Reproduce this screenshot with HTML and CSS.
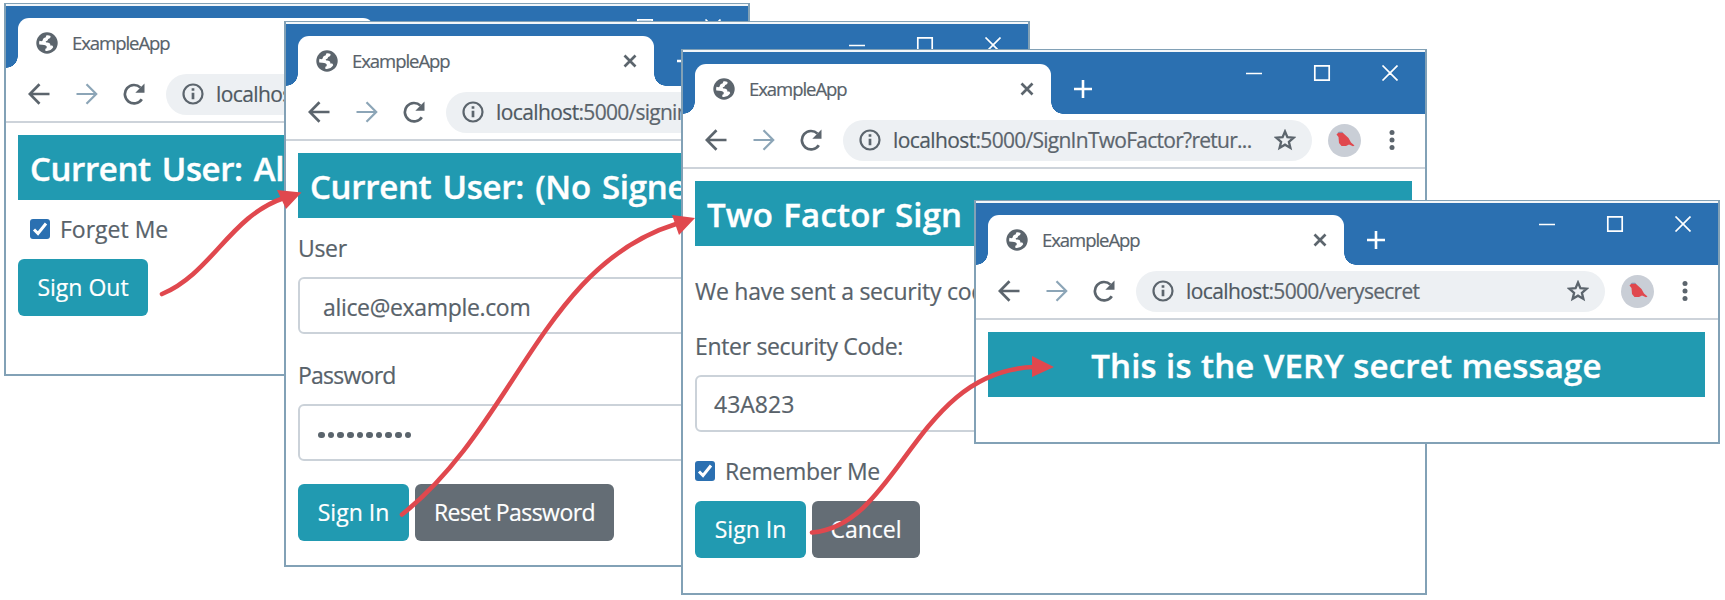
FILE: index.html
```html
<!DOCTYPE html>
<html lang="en">
<head>
<meta charset="utf-8">
<title>ExampleApp</title>
<link rel="stylesheet" href="styles.css">
</head>
<body>
<svg class="defs" width="0" height="0">
  <symbol id="globe" viewBox="0 0 22 22"><circle cx="11" cy="11" r="10.7" fill="#5c656d"/><path d="M10.5 3.2C12 3 13.500 3.300 14.500 4C14.800 5.500 14 6.700 12.200 7C11.800 8.300 11.500 9 9.800 9.300C9.500 10.800 10.800 10.600 12.500 10.700C14 11 14.500 12.200 14.300 13.500H16.200C16.800 14 17 14.700 17.200 15.300C15.800 17.500 13.500 18.900 11 18.900C10.500 18.900 9.800 18.800 9.300 18.700V16.800C10.800 16.600 10.900 15.500 10.600 14.300C9.800 12.800 7.500 12.700 3.300 12.500C3 10.800 3.200 9.800 3.500 8.800C5 9.300 6 9.300 6.600 8.600C7 6.500 8 6 9.500 5.600Z" fill="#fff"/></symbol>
  <symbol id="close" viewBox="0 0 14 14"><path d="M1.500 1.500l11 11m0-11l-11 11" stroke="#5c656d" stroke-width="2.700"/></symbol>
  <symbol id="plus" viewBox="0 0 18 18"><path d="M9 0v18M0 9h18" stroke="#fff" stroke-width="2.600"/></symbol>
  <symbol id="controls" viewBox="0 0 152 16"><path d="M0 8.500h16M68.800.8h14.400v14.400h-14.400zM136.500.5l15 15m0-15l-15 15" fill="none" stroke="#fff" stroke-width="1.700"/></symbol>
  <symbol id="arrow" viewBox="0 0 22 22"><path d="M21.500 11H2M11.500 1.300L1.800 11l9.700 9.700" fill="none" stroke="currentColor" stroke-width="2.700"/></symbol>
  <symbol id="forward" viewBox="0 0 22 22"><path d="M.5 11H20M10.500 1.300l9.700 9.700-9.700 9.700" fill="none" stroke="currentColor" stroke-width="2.200"/></symbol>
  <symbol id="reload" viewBox="0 0 22 22"><path d="M18.800 16.200A9.200 9.200 0 1 1 17.500 4.600" fill="none" stroke="#5c656d" stroke-width="2.700"/><path d="M21.500.5v9.200h-9.200z" fill="#5c656d"/></symbol>
  <symbol id="info" viewBox="0 0 22 22"><circle cx="11" cy="11" r="9.500" fill="none" stroke="#5c656d" stroke-width="2.200"/><path d="M11 9.700v6.500M11 5.300v2.500" stroke="#5c656d" stroke-width="2.700"/></symbol>
  <symbol id="star" viewBox="0 0 22 22"><path d="M11 2.500l2.400 5.700 6.200.5-4.700 4.100 1.500 6.100L11 15.700l-5.400 3.200 1.500-6.100-4.700-4.100 6.200-.5z" fill="none" stroke="#5c656d" stroke-width="2.300"/></symbol>
  <symbol id="avatar" viewBox="0 0 33 33"><circle cx="16.500" cy="16.500" r="16.500" fill="#c9ced6"/><path d="M8.500 10.500l2-2h4l6 5.500 2.500 4.500 3.500 3-1.500.8-4-1.800-3 1.500h-4.500l-2.500-3-.5-6z" fill="#e0484e"/><path d="M9.500 8.800l1.500-1.100h3l1 1z" fill="#7f93b3"/></symbol>
  <symbol id="dots" viewBox="0 0 6 20"><circle cx="3" cy="2.500" r="2.500"/><circle cx="3" cy="10" r="2.500"/><circle cx="3" cy="17.500" r="2.500"/></symbol>
  <symbol id="tick" viewBox="0 0 20 20"><path d="M4 10.500l4 4 8-10" fill="none" stroke="#fff" stroke-width="3"/></symbol>
</svg>
<main class="desktop">
  <section class="window w1">
    <div class="titlebar">
      <div class="tab"><svg class="i22"><use href="#globe"/></svg><span class="tab-title">ExampleApp</span><svg class="i14"><use href="#close"/></svg></div>
      <svg class="plus"><use href="#plus"/></svg><svg class="controls"><use href="#controls"/></svg>
    </div>
    <div class="toolbar">
      <svg class="i22"><use href="#arrow"/></svg><svg class="i22 forward"><use href="#forward"/></svg><svg class="i22 reload"><use href="#reload"/></svg>
      <div class="omnibox"><svg class="i22"><use href="#info"/></svg><span class="url"><b>localhost</b>:5000/signout</span><svg class="i22"><use href="#star"/></svg></div>
      <svg class="avatar"><use href="#avatar"/></svg><svg class="dots"><use href="#dots"/></svg>
    </div>
    <div class="page">
      <h2 class="banner">Current User: Alice</h2>
      <label class="check forget"><span class="box"><svg class="tick"><use href="#tick"/></svg></span><span class="forget-text">Forget Me</span></label>
      <div class="buttons"><span class="btn out">Sign Out</span></div>
    </div>
  </section>

  <section class="window w2">
    <div class="titlebar">
      <div class="tab"><svg class="i22"><use href="#globe"/></svg><span class="tab-title">ExampleApp</span><svg class="i14"><use href="#close"/></svg></div>
      <svg class="plus"><use href="#plus"/></svg><svg class="controls"><use href="#controls"/></svg>
    </div>
    <div class="toolbar">
      <svg class="i22"><use href="#arrow"/></svg><svg class="i22 forward"><use href="#forward"/></svg><svg class="i22 reload"><use href="#reload"/></svg>
      <div class="omnibox"><svg class="i22"><use href="#info"/></svg><span class="url"><b>localhost</b>:5000/signin</span><svg class="i22"><use href="#star"/></svg></div>
      <svg class="avatar"><use href="#avatar"/></svg><svg class="dots"><use href="#dots"/></svg>
    </div>
    <div class="page">
      <h2 class="banner no-user">Current User: (No Signed</h2>
      <div class="label user">User</div>
      <div class="field email">alice@example.com</div>
      <div class="label password">Password</div>
      <div class="field masked"><span class="mask"><i></i><i></i><i></i><i></i><i></i><i></i><i></i><i></i><i></i><i></i></span></div>
      <div class="buttons"><span class="btn in">Sign In</span><span class="btn grey reset">Reset Password</span></div>
    </div>
  </section>

  <section class="window w3">
    <div class="titlebar">
      <div class="tab"><svg class="i22"><use href="#globe"/></svg><span class="tab-title">ExampleApp</span><svg class="i14"><use href="#close"/></svg></div>
      <svg class="plus"><use href="#plus"/></svg><svg class="controls"><use href="#controls"/></svg>
    </div>
    <div class="toolbar">
      <svg class="i22"><use href="#arrow"/></svg><svg class="i22 forward"><use href="#forward"/></svg><svg class="i22 reload"><use href="#reload"/></svg>
      <div class="omnibox"><svg class="i22"><use href="#info"/></svg><span class="url"><b>localhost</b>:5000/SignInTwoFactor?retur...</span><svg class="i22"><use href="#star"/></svg></div>
      <svg class="avatar"><use href="#avatar"/></svg><svg class="dots"><use href="#dots"/></svg>
    </div>
    <div class="page">
      <h2 class="banner factor">Two Factor Sign</h2>
      <div class="label sent">We have sent a security code</div>
      <div class="label enter">Enter security Code:</div>
      <div class="field code">43A823</div>
      <label class="check remember"><span class="box"><svg class="tick"><use href="#tick"/></svg></span><span class="remember-text">Remember Me</span></label>
      <div class="buttons"><span class="btn in">Sign In</span><span class="btn grey cancel">Cancel</span></div>
    </div>
  </section>

  <section class="window w4">
    <div class="titlebar">
      <div class="tab"><svg class="i22"><use href="#globe"/></svg><span class="tab-title">ExampleApp</span><svg class="i14"><use href="#close"/></svg></div>
      <svg class="plus"><use href="#plus"/></svg><svg class="controls"><use href="#controls"/></svg>
    </div>
    <div class="toolbar">
      <svg class="i22"><use href="#arrow"/></svg><svg class="i22 forward"><use href="#forward"/></svg><svg class="i22 reload"><use href="#reload"/></svg>
      <div class="omnibox"><svg class="i22"><use href="#info"/></svg><span class="url"><b>localhost</b>:5000/verysecret</span><svg class="i22"><use href="#star"/></svg></div>
      <svg class="avatar"><use href="#avatar"/></svg><svg class="dots"><use href="#dots"/></svg>
    </div>
    <div class="page">
      <h2 class="banner secret">This is the VERY secret message</h2>
    </div>
  </section>

  <svg class="flow" viewBox="0 0 1725 600">
    <g fill="none" stroke="#e0484e" stroke-width="4.600" stroke-linecap="round">
      <path d="M162 294C212 273 230 216 284 198"/>
      <path d="M402 514.500C515 425 543 265 676 224"/>
      <path d="M812 532.500C900 525 915 370 1035 367"/>
    </g>
    <path d="M277 190l24.500 2.500L286 209zM672 215l23 3-16 17zM1032 356l22 11-22 10z" fill="#e0484e"/>
  </svg>
</main>
</body>
</html>
```
FILE: styles.css
```css
* { box-sizing: border-box; }
body { margin: 0; background: #fff; font-family: "Open Sans", "Noto Sans", sans-serif; color: #58626a; }
svg { display: block; flex: none; }
.defs { position: absolute; }
.desktop { position: relative; width: 1725px; height: 600px; overflow: hidden; }

.window { position: absolute; width: 746px; overflow: hidden; background: #fff; border: 2px solid #82a1b6; border-top-width: 1px; }
.w1 { left: 4px; top: 3px; height: 373px; }
.w2 { left: 284px; top: 21px; height: 546px; }
.w3 { left: 681px; top: 49px; height: 546px; }
.w4 { left: 974px; top: 200px; height: 244px; }

.titlebar { display: flex; height: 64px; border-top: 2px solid #f2f6f9; background: #2b70b1; padding: 12px 27px 0 12px; }
.tab { position: relative; display: flex; align-items: center; width: 356px; height: 50px; padding: 0 17px 0 18px; background: #fff; border-radius: 11px 11px 0 0; }
.tab::before, .tab::after { content: ""; position: absolute; bottom: 0; width: 12px; height: 12px; }
.tab::before { left: -12px; background: radial-gradient(circle at 0 0, transparent 11.500px, #fff 12px); }
.tab::after { right: -12px; background: radial-gradient(circle at 100% 0, transparent 11.500px, #fff 12px); }
.tab-title { flex: 1; margin-left: 14px; font-size: 18.500px; line-height: 28px; letter-spacing: -1.05px; -webkit-text-stroke: 0.2px; }
.i22 { width: 22px; height: 22px; }
.i14 { width: 14px; height: 14px; }
.plus { width: 18px; height: 18px; margin: 16px 0 0 23px; }
.controls { width: 152px; height: 16px; margin: 1px 0 0 auto; }

.toolbar { display: flex; align-items: center; height: 55px; padding: 0 0 1px 22px; border-bottom: 2px solid #cdd3da; color: #5c656d; }
.forward { margin-left: 26px; color: #8ca5b7; }
.reload { margin-left: 25px; }
.omnibox { display: flex; align-items: center; width: 469px; height: 41px; margin-left: 21px; padding: 0 16px 0 16px; border-radius: 21px; background: #edf0f3; }
.url { flex: 1; margin-left: 12px; font-size: 21px; line-height: 30px; letter-spacing: -0.73px; white-space: nowrap; -webkit-text-stroke: 0.2px; }
.url b { font-weight: 500; color: #4f5961; letter-spacing: -0.6px; }
.avatar { width: 33px; height: 33px; margin-left: 16px; }
.dots { width: 6px; height: 20px; margin-left: 28px; fill: #5c656d; }

.page { padding: 12px 13px 0 12px; font-size: 23px; line-height: 32px; white-space: nowrap; -webkit-text-stroke: 0.2px; }
.banner { height: 65px; margin: 0; padding: 0 12px; overflow: hidden; background: #219ab1; color: #fff; font-size: 33px; font-weight: 600; line-height: 68px; letter-spacing: -0.4px; word-spacing: 3px; -webkit-text-stroke: 0.4px; }
.no-user { letter-spacing: -0.3px; }
.factor { letter-spacing: 0.15px; word-spacing: 1.500px; }
.secret { text-align: center; letter-spacing: 0.18px; word-spacing: 0.5px; }
.label, .email, .remember-text { letter-spacing: -0.33px; }
.check { display: flex; align-items: center; height: 32px; }
.box { width: 20px; height: 20px; border-radius: 3px; background: #2b70b1; }
.tick { width: 20px; height: 20px; }
.forget { margin: 13px 0 14px 12px; gap: 10px; }
.remember { margin: 23px 0 14px; gap: 10px; }
.user { margin-top: 14px; }
.page .password { margin-top: 25px; letter-spacing: -0.75px; }
.field { display: flex; align-items: center; height: 57px; margin-top: 13px; padding-left: 18px; border: 2px solid #cbd2d9; border-radius: 6px; }
.email { padding: 2px 0 0 23px; }
.masked { padding-top: 5px; }
.mask { display: flex; gap: 3px; }
.mask i { width: 6.650px; height: 6.650px; border-radius: 50%; background: #5a646c; }
.page .sent { margin-top: 29px; letter-spacing: -0.26px; }
.enter { margin-top: 23px; }
.code { padding-left: 17px; }
.buttons { display: flex; gap: 6px; }
.field + .buttons { margin-top: 23px; }
.btn { display: flex; align-items: center; justify-content: center; height: 57px; padding-bottom: 2px; border-radius: 6px; background: #219ab1; color: #fff; }
.grey { background: #646d75; }
.out { width: 130px; }
.in { width: 111px; }
.reset { width: 199px; letter-spacing: -0.55px; }
.cancel { width: 108px; }
.flow { position: absolute; inset: 0; width: 1725px; height: 600px; }
```
